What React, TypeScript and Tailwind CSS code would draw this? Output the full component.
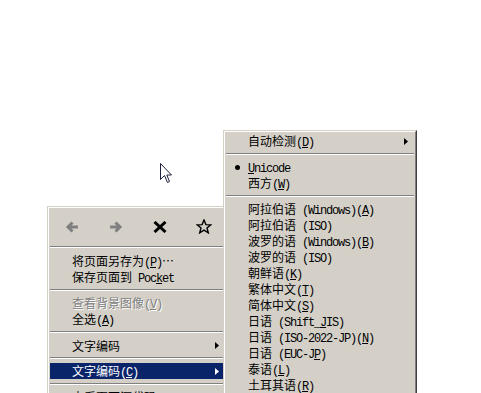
type Run = { s: string; latin: boolean; u: boolean }

// "&X" marks a mnemonic letter (underlined)
function Label({ text }: { text: string }) {
  const runs: Run[] = []
  for (let i = 0; i < text.length; i++) {
    let c = text[i]
    let u = false
    if (c === "&") {
      u = true
      c = text[++i]
    }
    const latin = c.charCodeAt(0) < 0x100
    const last = runs[runs.length - 1]
    if (last && last.latin === latin && last.u === u) last.s += c
    else runs.push({ s: c, latin, u })
  }
  return (
    <span className="whitespace-pre">
      {runs.map((r, i) => (
        <span
          key={i}
          className={
            (r.latin
              ? "font-['Liberation_Mono',monospace] text-[12px] tracking-[-1.2px]"
              : "font-['Noto_Sans_CJK_SC',sans-serif] text-[12px]") + (r.u ? " underline underline-offset-1" : "")
          }
        >
          {r.s}
        </span>
      ))}
    </span>
  )
}

function Arrow({ white }: { white?: boolean }) {
  return (
    <svg width="4" height="7" viewBox="0 0 4 7">
      <polygon points="0,0 4,3.5 0,7" fill={white ? "#ffffff" : "#000000"} />
    </svg>
  )
}

function Sep() {
  return (
    <div className="h-[10px] flex items-center">
      <div className="w-full h-[2px] border-t border-b border-t-[#808080] border-b-white" />
    </div>
  )
}

type Item = { text: string; sub?: boolean; dot?: boolean; disabled?: boolean; active?: boolean }

function Row({ item, pr }: { item: Item; pr: string }) {
  return (
    <div
      className={`flex items-center h-[16px] leading-[16px] ${pr} ${
        item.active ? "bg-[#0a246a] text-white" : item.disabled ? "text-[#808080] [text-shadow:1px_1px_0_#fff]" : "text-black"
      }`}
    >
      <div className="w-[22px] flex justify-center shrink-0">
        {item.dot && <div className="w-[5px] h-[5px] rounded-full bg-black ml-[1px]" />}
      </div>
      <div className="flex-1">
        <Label text={item.text} />
      </div>
      {item.sub && <Arrow white={item.active} />}
    </div>
  )
}

function Frame({ children, className }: { children: React.ReactNode; className: string }) {
  return (
    <div className={`absolute bg-[#d4d0c8] border border-t-[#d4d0c8] border-l-[#d4d0c8] border-r-[#404040] border-b-[#404040] ${className}`}>
      <div className="border border-t-white border-l-white border-r-[#808080] border-b-[#808080] px-[1px]">{children}</div>
    </div>
  )
}

export default function App() {
  const leftTop: Item[] = [{ text: "将页面另存为(&P)…" }, { text: "保存页面到 Poc&ket" }]
  const leftMid: Item[] = [{ text: "查看背景图像(&V)", disabled: true }, { text: "全选(&A)" }]

  const encodings: Item[] = [
    { text: "阿拉伯语 (Windows)(&A)" },
    { text: "阿拉伯语 (ISO)" },
    { text: "波罗的语 (Windows)(&B)" },
    { text: "波罗的语 (ISO)" },
    { text: "朝鲜语(&K)" },
    { text: "繁体中文(&T)" },
    { text: "简体中文(&S)" },
    { text: "日语 (Shift_&JIS)" },
    { text: "日语 (ISO-2022-JP)(&N)" },
    { text: "日语 (EUC-J&P)" },
    { text: "泰语(&L)" },
    { text: "土耳其语(&R)" },
  ]

  return (
    <div className="relative w-[481px] h-[393px] bg-white overflow-hidden">
      {/* context menu */}
      <Frame className="left-[47px] top-[206px] w-[182px]">
        <div className="h-[34px] pt-[3px] flex items-center">
          <div className="w-[44px] flex justify-center">
            <svg width="14" height="12" viewBox="0 0 14 12">
              <path d="M13 6H3M7.5 1.5L3 6l4.5 4.5" stroke="#808080" strokeWidth="3" fill="none" />
            </svg>
          </div>
          <div className="w-[44px] flex justify-center">
            <svg width="14" height="12" viewBox="0 0 14 12">
              <path d="M1 6h10M6.5 1.5L11 6l-4.5 4.5" stroke="#808080" strokeWidth="3" fill="none" />
            </svg>
          </div>
          <div className="w-[44px] flex justify-center">
            <svg width="16" height="12" viewBox="0 0 16 12">
              <path d="M2.5 1l11 10M13.5 1l-11 10" stroke="#000" strokeWidth="3" fill="none" />
            </svg>
          </div>
          <div className="w-[44px] flex justify-center">
            <svg width="16" height="15" viewBox="0 0 16 15">
              <polygon
                points="8,1 9.9,5.6 14.8,5.9 11,9 12.3,13.8 8,11.1 3.7,13.8 5,9 1.2,5.9 6.1,5.6"
                stroke="#000"
                strokeWidth="1.4"
                fill="none"
                strokeLinejoin="miter"
              />
            </svg>
          </div>
        </div>
        <Sep />
        <div className="pt-[1px]">
          {leftTop.map((it, i) => (
            <Row key={i} item={it} pr="pr-[7px]" />
          ))}
        </div>
        <Sep />
        {leftMid.map((it, i) => (
          <Row key={i} item={it} pr="pr-[7px]" />
        ))}
        <Sep />
        <Row item={{ text: "文字编码", sub: true }} pr="pr-[7px]" />
        <Sep />
        <Row item={{ text: "文字编码(&C)", sub: true, active: true }} pr="pr-[7px]" />
        <Sep />
        <Row item={{ text: "查看页面源代码(&V)" }} pr="pr-[7px]" />
      </Frame>

      {/* encoding submenu */}
      <Frame className="left-[223px] top-[130px] w-[194px]">
        <div className="pt-[1px]">
          <Row item={{ text: "自动检测(&D)", sub: true }} pr="pr-[6px]" />
          <Sep />
          <Row item={{ text: "&Unicode", dot: true }} pr="pr-[6px]" />
          <Row item={{ text: "西方(&W)" }} pr="pr-[6px]" />
          <Sep />
          {encodings.map((it, i) => (
            <Row key={i} item={it} pr="pr-[6px]" />
          ))}
        </div>
      </Frame>

      {/* mouse pointer */}
      <svg className="absolute left-[160px] top-[163px]" width="13" height="21" viewBox="0 0 13 21">
        <path d="M0.5 0.5V16.5L4.5 12.5L7.5 19.5L9.5 18.5L6.8 12H11.5Z" fill="#fff" stroke="#1c2038" strokeWidth="1" />
      </svg>
    </div>
  )
}
